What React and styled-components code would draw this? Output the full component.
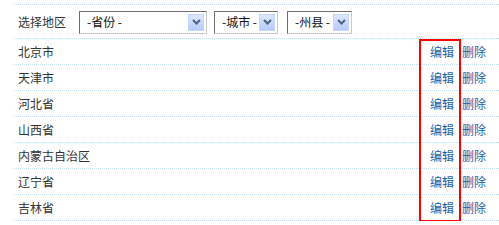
import React from "react"
import styled, { createGlobalStyle } from "styled-components"

const GlobalStyle = createGlobalStyle`
  body {
    margin: 0;
    background: #fff;
    font-family: "Noto Sans CJK SC", "DejaVu Sans", sans-serif;
    font-size: 12px;
    color: #333;
  }
`

const Panel = styled.div`
  position: relative;
  margin: 4px 0 0 14px;
  border-top: 1px dotted #bcdcf2;
`

const FilterRow = styled.div`
  display: flex;
  align-items: center;
  height: 33px;
  padding-left: 4px;
  border-bottom: 1px dotted #bcdcf2;
`

const Label = styled.span`
  width: 61px;
  color: #333;
  line-height: 14px;
`

const SelectBox = styled.div`
  display: flex;
  align-items: center;
  justify-content: space-between;
  box-sizing: border-box;
  width: ${p => p.$w}px;
  height: 23px;
  margin-right: ${p => p.$gap || 0}px;
  margin-top: 1px;
  padding: 0 2px 0 7px;
  border: 1px solid;
  border-color: #6f6f6f #c9c9c9 #c9c9c9 #6f6f6f;
  background: #fff;
  color: #111;
  line-height: 14px;
`

const Arrow = styled.span`
  display: flex;
  align-items: center;
  justify-content: center;
  width: 16px;
  height: 17px;
  border: 1px solid #c4d5fb;
  box-sizing: border-box;
  background: linear-gradient(#dce7ff, #b7cbfb);
`

const Row = styled.div`
  display: flex;
  align-items: center;
  justify-content: space-between;
  height: 25px;
  padding: 0 13px 0 4px;
  border-bottom: 1px dotted #bcdcf2;
  line-height: 14px;
`

const Actions = styled.div`
  display: flex;
  gap: 8px;
`

const ActionLink = styled.a`
  color: #1d5ea8;
  text-decoration: none;
`

const Highlight = styled.div`
  position: absolute;
  left: 405px;
  top: 34px;
  width: 42px;
  height: 183px;
  box-sizing: border-box;
  border: 2px solid #ff0000;
`

const Chevron = () => (
  <svg width="9" height="6" viewBox="0 0 9 6">
    <path d="M1 1 L4.5 4.5 L8 1" fill="none" stroke="#4d6185" strokeWidth="2" />
  </svg>
)

const Select = ({ text, w, gap }) => (
  <SelectBox $w={w} $gap={gap}>
    <span>{text}</span>
    <Arrow><Chevron /></Arrow>
  </SelectBox>
)

const regions = ["北京市", "天津市", "河北省", "山西省", "内蒙古自治区", "辽宁省", "吉林省"]

export default function App() {
  return (
    <>
      <GlobalStyle />
      <Panel>
        <FilterRow>
          <Label>选择地区</Label>
          <Select text="-省份 -" w={128} gap={7} />
          <Select text="-城市 -" w={64} gap={9} />
          <Select text="-州县 -" w={65} />
        </FilterRow>
        {regions.map(r => (
          <Row key={r}>
            <span>{r}</span>
            <Actions>
              <ActionLink href="#">编辑</ActionLink>
              <ActionLink href="#">删除</ActionLink>
            </Actions>
          </Row>
        ))}
        <Highlight />
      </Panel>
    </>
  )
}
